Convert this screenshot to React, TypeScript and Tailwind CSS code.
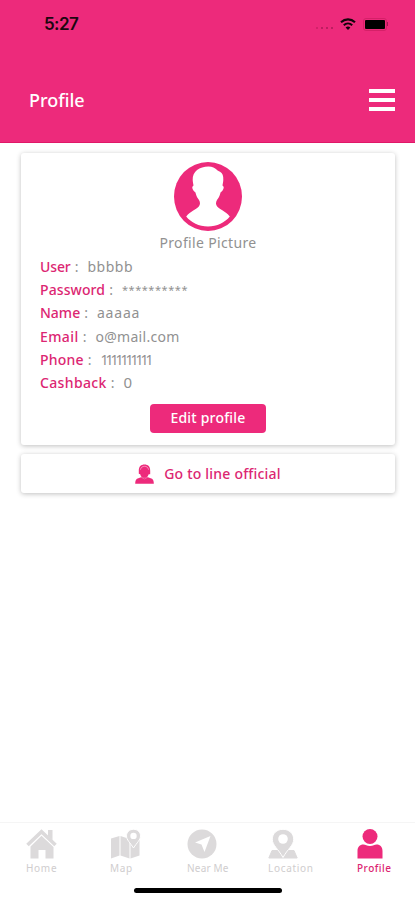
const fields = [
  { label: "User", value: "bbbbb", labelClass: "tracking-[-0.1px]", valueClass: "tracking-[0.5px]" },
  { label: "Password", value: "**********", labelClass: "tracking-[0.1px]", valueClass: "text-[11px] tracking-[0.55px]" },
  { label: "Name", value: "aaaaa", labelClass: "", valueClass: "tracking-[0.8px]" },
  { label: "Email", value: "o@mail.com", labelClass: "tracking-[0.4px]", valueClass: "tracking-[0.3px]" },
  { label: "Phone", value: "1111111111", labelClass: "tracking-[0.2px]", valueClass: "tracking-[-3px]" },
  { label: "Cashback", value: "0", labelClass: "tracking-[0.35px]", valueClass: "text-[15px]" },
]

function WifiIcon() {
  return (
    <svg viewBox="0 0 16 12" className="w-4 h-3" fill="none" stroke="#12040a" strokeWidth="2.1">
      <path d="M1 4.2C5 .4 11 .4 15 4.2" />
      <path d="M3.8 7.2c2.4-2.2 6-2.2 8.4 0" />
      <path d="M8 12 5.6 9.5c1.4-1.2 3.4-1.2 4.8 0z" fill="#12040a" stroke="none" />
    </svg>
  )
}

function Avatar() {
  return (
    <svg viewBox="0 0 68 69" className="w-[68px] h-[69px]">
      <ellipse cx="34" cy="34.5" rx="34" ry="34.5" fill="#ed2a7b" />
      <path
        d="M34.500 4.500c4 0 6.500 1.500 8 3 1 .9 2 1.800 3.500 2.300 2.500 1 3.500 4.200 3.300 8.200-.1 2.300-.6 4-.8 5.500 1.700.9 1.600 3-.1 5.200-.8 1.100-1.700 1-2 2.300-.6 3-2 5-3.400 7-1.400 2.200-1.300 4.700.2 6.500 2.300 3 8.300 4.500 12.600 10C51 60.500 43 64.500 34 64.500S17 60.500 12.200 54.500c4.300-5.500 10.300-7 12.600-10 1.500-1.800 1.600-4.300.2-6.500-1.400-2-2.800-4-3.400-7-.3-1.300-1.200-1.200-2-2.300-1.700-2.200-1.800-4.300-.1-5.200-.2-1.500-.7-3.200-.8-5.500C18.300 9.500 25.500 4.500 34.500 4.500z"
        fill="#fff"
      />
    </svg>
  )
}

function AgentIcon() {
  return (
    <svg viewBox="0 0 19 20" className="w-[19px] h-5" fill="#ed2a7b">
      <path d="M3.800 6.700C3.800 2.600 6 .6 9.500.6s5.700 2 5.700 6.100v3.500h-1.500c-.5 1.600-1.300 2.600-2.200 3.300h-4c-1.200-.7-2-1.700-2.300-3.300l-1.400-.5z" />
      <path d="M6 13.300h7l4 1.400c1.200.6 1.700 2.200 1.800 5H.2c.1-2.800.6-4.400 1.800-5z" />
      <path d="M5.400 5.700C6 3.300 7.400 2.300 9.500 2.300s3.500 1 4.100 3.400" fill="none" stroke="#f8a3c6" strokeWidth=".8" />
      <path d="m6.500 13.500 3 1.500 3-1.500" fill="none" stroke="#f47bae" strokeWidth=".6" />
    </svg>
  )
}

function HomeIcon() {
  return (
    <svg viewBox="0 0 31 30" className="w-[31px] h-[30px]" fill="#dcdadb">
      <path d="M22 1h4.500v10L22 7z" />
      <path d="M1.500 16 15.500 2.800l14 13.200" fill="none" stroke="#dcdadb" strokeWidth="3.600" />
      <path d="M15.500 6.800 27.500 18v11.500h-8V21h-7v8.500h-8V17.500z" />
    </svg>
  )
}

function MapIcon() {
  return (
    <svg viewBox="0 0 31 30" className="w-[31px] h-[30px]" fill="#dcdadb">
      <path d="M1 9.500 9.500 7v19.500L1 29.500zM10.500 7l9 3v19.500l-9-3zM20.500 12l9-2.500v17l-9 3z" />
      <path
        d="M23.500.3c-4 0-7 2.900-7 6.600 0 4 3.500 6.600 7 12.100 3.500-5.500 7-8.100 7-12.100 0-3.700-3-6.600-7-6.600z"
        stroke="#fff"
      />
      <circle cx="23.500" cy="6.900" r="3.200" fill="#fff" />
    </svg>
  )
}

function NearIcon() {
  return (
    <svg viewBox="0 0 30 30" className="w-[30px] h-[30px]">
      <circle cx="15" cy="15" r="14.500" fill="#dcdadb" />
      <path d="M23.500 7 17.500 23l-3-7.500L8 13.500z" fill="#fff" />
    </svg>
  )
}

function LocationIcon() {
  return (
    <svg viewBox="0 0 30 30" className="w-[30px] h-[30px]">
      <path d="M4 21.500h22l3.200 7.500H.8z" fill="#dcdadb" stroke="#dcdadb" strokeLinejoin="round" />
      <path
        d="M15 .3C9 .3 4.300 4.500 4.300 10.200 4.300 16.500 10.500 20 15 28.500c4.500-8.500 10.700-12 10.700-18.300C25.700 4.500 21 .3 15 .3z"
        fill="#dcdadb"
        stroke="#fff"
      />
      <circle cx="15" cy="10" r="4.800" fill="#fff" />
    </svg>
  )
}

function ProfileIcon() {
  return (
    <svg viewBox="0 0 26 30" className="w-[26px] h-[30px]" fill="#ed2a7b">
      <circle cx="13" cy="7.500" r="7.500" />
      <path d="M.5 29.500V22c0-4 2.200-6.500 6-6.500 2 0 3.300 1.500 6.500 1.500s4.500-1.500 6.500-1.500c3.800 0 6 2.500 6 6.500v7.500z" />
    </svg>
  )
}

export default function App() {
  return (
    <div className="flex flex-col w-full h-[900px] bg-white overflow-hidden font-['Noto_Sans',sans-serif]">
      <header className="h-[143px] shrink-0 bg-[#ed2a7b] border-b border-[#e01768]">
        <div className="flex items-center justify-between h-12 pl-11 pr-[27px]">
          <span className="mt-[2px] text-[17px] font-semibold text-[#1c0710] font-['Inter',sans-serif] tracking-[-0.6px]">
            5:27
          </span>
          <div className="flex items-center">
            <div className="flex gap-[3px] mt-2 mr-[7px]">
              <span className="size-[2px] bg-[#d22269]" />
              <span className="size-[2px] bg-[#bd1e60]" />
              <span className="size-[2px] bg-[#bd1e60]" />
              <span className="size-[2px] bg-[#bd1e60]" />
            </div>
            <WifiIcon />
            <div className="ml-[7px] p-px rounded-[3px] border border-[#d52068]">
              <div className="w-5 h-[9px] rounded-[1px] bg-black" />
            </div>
            <span className="w-px h-1 bg-[#a01850]" />
          </div>
        </div>
        <div className="flex items-center justify-between h-[104px] pl-[29px] pr-5">
          <h1 className="text-lg font-medium text-white">Profile</h1>
          <button className="flex flex-col gap-[5px]">
            <span className="w-[26px] h-1 bg-white" />
            <span className="w-[26px] h-1 bg-white" />
            <span className="w-[26px] h-1 bg-white" />
          </button>
        </div>
      </header>

      <main className="flex-1 pt-[10px] pl-[21px] pr-5">
        <section className="flex flex-col items-center h-[292px] pt-[9px] rounded-[3px] shadow-[0_1px_5px_rgba(0,0,0,0.25)]">
          <Avatar />
          <p className="h-6 leading-6 text-sm tracking-[0.35px] text-[#919191]">Profile Picture</p>
          <div className="w-full pl-[19px]">
            {fields.map((field) => (
              <div key={field.label} className="flex h-[23.3px] items-center text-sm text-[#919191]">
                <span className={`font-medium text-[#dc2672] ${field.labelClass}`}>{field.label}</span>
                <span className="ml-1 mr-[9px]">:</span>
                <span className={field.valueClass}>{field.value}</span>
              </div>
            ))}
          </div>
          <button className="w-[116px] h-[29px] mt-[9px] rounded-[4px] bg-[#ed2a7b] text-sm font-medium tracking-[0.2px] text-white">
            Edit profile
          </button>
        </section>

        <section className="flex items-center justify-center gap-[10px] h-[39px] mt-[9px] rounded-[3px] shadow-[0_1px_5px_rgba(0,0,0,0.25)]">
          <AgentIcon />
          <span className="text-sm font-medium tracking-[0.2px] text-[#dc2672]">Go to line official</span>
        </section>
      </main>

      <nav className="flex h-[66px] pl-[26px] pt-[6px] border-t border-[#f5f5f5] text-[10px] leading-[18px] text-[#cfcdce]">
        <div className="w-[84px]">
          <HomeIcon />
          <span className="tracking-[0.7px]">Home</span>
        </div>
        <div className="w-[77px]">
          <MapIcon />
          <span className="tracking-[0.7px]">Map</span>
        </div>
        <div className="w-[81px]">
          <NearIcon />
          <span className="tracking-[0.2px]">Near Me</span>
        </div>
        <div className="w-[89px]">
          <LocationIcon />
          <span className="tracking-[0.7px]">Location</span>
        </div>
        <div>
          <ProfileIcon />
          <span className="font-medium tracking-[0.5px] text-[#dc2672]">Profile</span>
        </div>
      </nav>
      <div className="w-[148px] h-[5px] mx-auto mb-[7px] rounded-full bg-black" />
    </div>
  )
}
